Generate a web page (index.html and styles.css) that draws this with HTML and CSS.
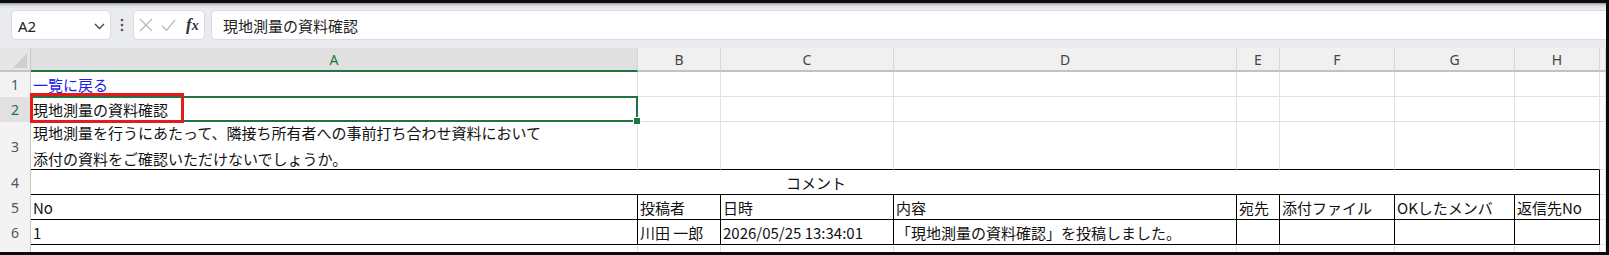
FILE: index.html
```html
<!DOCTYPE html>
<html lang="ja">
<head>
<meta charset="utf-8">
<title>Sheet</title>
<link rel="stylesheet" href="styles.css">
</head>
<body>
<div class="app">
  <div class="toolbar">
    <div class="namebox">
      <span class="ref">A2</span>
      <svg class="chev" width="11" height="7" viewBox="0 0 11 7"><path d="M1 1 L5.5 5.5 L10 1" fill="none" stroke="#444" stroke-width="1.3"/></svg>
    </div>
    <div class="dots">
      <svg width="4" height="14" viewBox="0 0 4 14"><circle cx="2" cy="2" r="1.3" fill="#555"/><circle cx="2" cy="7" r="1.3" fill="#555"/><circle cx="2" cy="12" r="1.3" fill="#555"/></svg>
    </div>
    <div class="fxbox">
      <svg width="14" height="14" viewBox="0 0 14 14"><path d="M1 1 L13 13 M13 1 L1 13" stroke="#b9b9b9" stroke-width="1.2" fill="none"/></svg>
      <svg width="15" height="13" viewBox="0 0 15 13"><path d="M1 6.5 L5.5 11.5 L14 1" stroke="#b9b9b9" stroke-width="1.2" fill="none"/></svg>
      <span class="fx"><i>f</i><i class="x">x</i></span>
    </div>
    <div class="formula">現地測量の資料確認</div>
  </div>

  <div class="sheet">
    <!-- column headers -->
    <div class="corner"><svg width="30" height="24" viewBox="0 0 30 24"><polygon points="27,5 27,20 13,20" fill="#cfcfcf"/></svg></div>
    <div class="ch sel">A</div>
    <div class="ch">B</div>
    <div class="ch">C</div>
    <div class="ch">D</div>
    <div class="ch">E</div>
    <div class="ch">F</div>
    <div class="ch">G</div>
    <div class="ch">H</div>
    <div class="ch"></div>

    <!-- row 1 -->
    <div class="rh">1</div>
    <div class="c"><a class="link" href="#">一覧に戻る</a></div>
    <div class="c"></div><div class="c"></div><div class="c"></div><div class="c"></div><div class="c"></div><div class="c"></div><div class="c"></div><div class="c"></div>

    <!-- row 2 -->
    <div class="rh rsel">2</div>
    <div class="c a2">現地測量の資料確認<span class="selbox"><span class="handle"></span></span><span class="redbox"></span></div>
    <div class="c"></div><div class="c"></div><div class="c"></div><div class="c"></div><div class="c"></div><div class="c"></div><div class="c"></div><div class="c"></div>

    <!-- row 3 -->
    <div class="rh">3</div>
    <div class="c bb wrap"><span>現地測量を行うにあたって、隣接ち所有者への事前打ち合わせ資料において<br>添付の資料をご確認いただけないでしょうか。</span></div>
    <div class="c bb"></div><div class="c bb"></div><div class="c bb"></div><div class="c bb"></div><div class="c bb"></div><div class="c bb"></div><div class="c bb"></div><div class="c"></div>

    <!-- row 4 -->
    <div class="rh">4</div>
    <div class="c bb br merged">コメント</div>
    <div class="c"></div>

    <!-- row 5 -->
    <div class="rh">5</div>
    <div class="c bb br">No</div>
    <div class="c bb br">投稿者</div>
    <div class="c bb br">日時</div>
    <div class="c bb br">内容</div>
    <div class="c bb br">宛先</div>
    <div class="c bb br">添付ファイル</div>
    <div class="c bb br">OKしたメンバ</div>
    <div class="c bb br">返信先No</div>
    <div class="c"></div>

    <!-- row 6 -->
    <div class="rh">6</div>
    <div class="c bb br">1</div>
    <div class="c bb br">川田 一郎</div>
    <div class="c bb br">2026/05/25 13:34:01</div>
    <div class="c bb br">「現地測量の資料確認」を投稿しました。</div>
    <div class="c bb br"></div>
    <div class="c bb br"></div>
    <div class="c bb br"></div>
    <div class="c bb br"></div>
    <div class="c"></div>

    <!-- row 7 -->
    <div class="rh r7">7</div>
    <div class="c"></div><div class="c"></div><div class="c"></div><div class="c"></div><div class="c"></div><div class="c"></div><div class="c"></div><div class="c"></div><div class="c"></div>
  </div>
</div>
</body>
</html>
```

FILE: styles.css
```css
* { box-sizing: border-box; }
html, body { margin: 0; padding: 0; background: #000; }
body { width: 1609px; height: 255px; overflow: hidden; }

.app {
  width: 1609px;
  height: 255px;
  border-top: 3px solid #0c0c0c;
  border-right: 3px solid #0c0c0c;
  border-bottom: 3px solid #0c0c0c;
  background: #e9ebee;
  display: flex;
  flex-direction: column;
  overflow: hidden;
  font-family: "Noto Sans CJK JP", "Noto Sans", sans-serif;
}

/* ---------- toolbar ---------- */
.toolbar {
  height: 45px;
  flex: none;
  display: flex;
  align-items: flex-start;
  padding: 7px 0 0 11px;
  background: linear-gradient(#9ea2a6 0px, #dfe2e5 3px, #e9ebee 5px);
}
.namebox {
  width: 100px;
  height: 30px;
  background: #fff;
  border: 1px solid #d9dbde;
  border-radius: 5px;
  display: flex;
  align-items: center;
  justify-content: space-between;
  padding: 0 4px 0 6px;
}
.ref {
  font-family: "Noto Sans", "Liberation Sans", sans-serif;
  font-size: 15px;
  color: #222;
  padding-top: 2px;
}
.chev { margin-right: 1px; margin-top: 2px; }
.dots {
  width: 22px;
  height: 30px;
  display: flex;
  align-items: center;
  justify-content: center;
}
.fxbox {
  width: 72px;
  height: 30px;
  background: #fff;
  border: 1px solid #d9dbde;
  border-radius: 5px;
  display: flex;
  align-items: center;
  gap: 8px;
  padding: 0 0 0 5px;
}
.fx {
  font-family: "Liberation Serif", "DejaVu Serif", serif;
  font-size: 17px;
  font-weight: bold;
  color: #333;
  letter-spacing: 0;
  margin-left: 2px;
}
.fx i { font-style: italic; }
.fx .x { font-size: 14px; }
.formula {
  flex: 1;
  height: 30px;
  margin-left: 6px;
  background: #fff;
  border: 1px solid #d9dbde;
  border-right: none;
  border-radius: 5px 0 0 5px;
  display: flex;
  align-items: center;
  padding: 0 0 0 11px;
  font-size: 15px;
  color: #222;
}

/* ---------- sheet ---------- */
.sheet {
  flex: 1;
  display: grid;
  grid-template-columns: 31px 607px 83px 173px 343px 43px 115px 120px 85px 1fr;
  grid-template-rows: 24px 25px 25px 48px 25px 25px 25px 1fr;
  background: #fff;
}
.corner {
  background: #e6e6e6;
  border-right: 1px solid #c8c8c8;
  border-bottom: 2px solid #c4c4c4;
  display: flex;
}
.ch {
  background: #f0f0f0;
  border-right: 1px solid #d6d6d6;
  border-bottom: 2px solid #c2c2c2;
  display: flex;
  align-items: center;
  justify-content: center;
  font-family: "Noto Sans", "Liberation Sans", sans-serif;
  font-size: 14px;
  color: #444;
}
.ch.sel {
  background: #e0e0e0;
  color: #217346;
  border-bottom: 2px solid #217346;
}
.rh {
  background: #f3f3f3;
  border-right: 1px solid #c8c8c8;
  display: flex;
  align-items: center;
  justify-content: center;
  font-family: "Noto Sans", "Liberation Sans", sans-serif;
  font-size: 14px;
  color: #555;
}
.rh.rsel { background: #e1e1e1; color: #217346; }
.rh.r7 { align-items: flex-start; padding-top: 3px; }

.c {
  border-right: 1px solid #e1e1e1;
  border-bottom: 1px solid #e1e1e1;
  padding: 0 0 0 2px;
  display: flex;
  align-items: center;
  white-space: nowrap;
  font-size: 15px;
  color: #111;
  min-width: 0;
}
.c.bb { border-bottom-color: #000; }
.c.br { border-right-color: #000; }
.c.wrap { line-height: 26px; }
.c.wrap span { display: block; margin-top: 1px; }
.merged {
  grid-column: span 8;
  justify-content: center;
}
.link { color: #1c1cf0; text-decoration: underline; text-underline-offset: 2px; }

.a2 { position: relative; }
.selbox {
  position: absolute;
  left: -1px;
  top: -1px;
  right: -1px;
  bottom: -1px;
  border: 2px solid #217346;
  border-left: none;
}
.handle {
  position: absolute;
  right: -4px;
  bottom: -4px;
  width: 6px;
  height: 6px;
  background: #217346;
  outline: 1px solid #fff;
}
.redbox {
  position: absolute;
  left: -1px;
  top: -4px;
  width: 154px;
  height: 30px;
  border: 3px solid #e41b1b;
}
```
